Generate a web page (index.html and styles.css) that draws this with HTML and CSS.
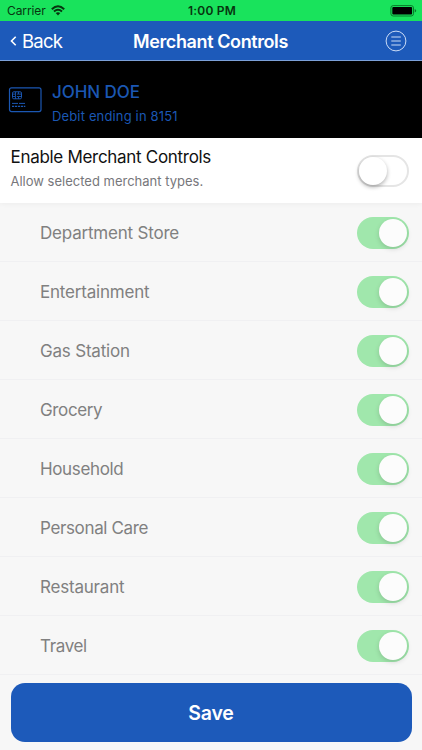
FILE: index.html
```html
<!DOCTYPE html>
<html lang="en">
<head>
<meta charset="utf-8">
<title>Merchant Controls</title>
<link rel="stylesheet" href="styles.css">
</head>
<body>
<div class="status">
  <div class="carrier"><span>Carrier</span>
    <svg width="14" height="11" viewBox="0 0 14 11" fill="none" stroke="#07350f" stroke-width="2"><path d="M.8 4.2Q7-1.6 13.2 4.2M3 6.6Q7 3 11 6.6"/><path d="M4.7 8.1Q7 6.2 9.3 8.1L7 10.5Z" fill="#07350f" stroke="none"/></svg>
  </div>
  <span class="time">1:00 PM</span>
  <svg class="battery" width="27" height="12" viewBox="0 0 27 12"><rect x=".9" y=".6" width="22.6" height="10.4" rx="2.3" fill="none" stroke="#087c2a"/><rect x="2.3" y="2" width="19.8" height="7.6" rx="1" fill="#000"/><path d="M24.7 4v3.6q1.5-.5 1.5-1.8T24.7 4Z" fill="#087c2a"/></svg>
</div>
<header class="nav">
  <div class="back"><svg width="7" height="10" viewBox="0 0 7 10" fill="none" stroke="#fff" stroke-width="1.6"><path d="M5.7.8 1.5 5l4.2 4.2"/></svg><span>Back</span></div>
  <h1>Merchant Controls</h1>
  <svg class="menu" width="22" height="22" viewBox="0 0 22 22" fill="none" stroke="#cbdcf6" stroke-width="1"><circle cx="11" cy="11" r="9.9"/><path d="M6.3 7h9.5M6.3 11h9.5M6.3 15h9.5"/></svg>
</header>
<section class="account">
  <svg width="34" height="26" viewBox="0 0 34 26" fill="none" stroke="#1b57b3"><rect x="1.5" y=".8" width="31.5" height="23.8" rx="2" stroke-width="1.2"/><rect x="4.5" y="4.8" width="9" height="7" rx="1.3"/><path d="M4.5 7.1h3V4.8M4.5 9.5h3v2.3M7.5 7.1v2.4M13.5 7.1h-3M13.5 9.5h-3M10.5 4.8v2.3H8.8M10.5 11.8V9.5H8.8" stroke-width=".9"/><path d="M4 16.4h6M11 16.4h6" stroke-width="1"/><path d="M4 19.4h13.3" stroke-width="1.4" stroke-dasharray="2.2 .8"/></svg>
  <div><div class="name">JOHN DOE</div><div class="card">Debit ending in 8151</div></div>
</section>
<section class="enable">
  <div class="copy"><div class="title">Enable Merchant Controls</div><div class="hint">Allow selected merchant types.</div></div>
  <span class="toggle off"></span>
</section>
<ul class="types">
  <li><span>Department Store</span><i class="toggle"></i></li>
  <li><span>Entertainment</span><i class="toggle"></i></li>
  <li><span>Gas Station</span><i class="toggle"></i></li>
  <li><span class="tight">Grocery</span><i class="toggle"></i></li>
  <li><span class="tight">Household</span><i class="toggle"></i></li>
  <li><span class="tight">Personal Care</span><i class="toggle"></i></li>
  <li><span>Restaurant</span><i class="toggle"></i></li>
  <li><span class="tight">Travel</span><i class="toggle"></i></li>
</ul>
<button class="save">Save</button>
</body>
</html>
```
FILE: styles.css
```css
* { box-sizing: border-box; }
body { margin: 0; width: 422px; height: 750px; overflow: hidden; background: #f7f7f7; font-family: Inter, "Liberation Sans", sans-serif; display: flex; flex-direction: column; }
svg { display: block; flex: none; }
.status { height: 21px; background: #19e35c; color: #07350f; display: grid; grid-template-columns: 1fr auto 1fr; align-items: center; padding: 0 5px 0 7px; font-size: 12px; line-height: 21px; }
.carrier { display: flex; align-items: center; gap: 5px; }
.carrier span { letter-spacing: -.1px; }
.time { font-weight: 600; letter-spacing: .2px; }
.battery { justify-self: end; }
.nav { height: 40px; background: #1d5aba; border-bottom: 1px solid #7ca1d8; color: #fff; display: grid; grid-template-columns: 1fr auto 1fr; align-items: center; padding: 0 15px 0 10px; }
.back { display: flex; align-items: center; gap: 5px; font-size: 18.5px; letter-spacing: -.75px; }
.back span { letter-spacing: -.75px; }
.nav h1 { margin: 1px 0 0 4px; font-size: 18px; font-weight: 600; letter-spacing: -.4px; }
.menu { justify-self: end; }
.account { height: 77px; background: #000; color: #1b57b3; display: flex; align-items: center; gap: 10px; padding-left: 8px; }
.account > div { padding-top: 8px; }
.name { font-size: 17px; font-weight: 500; line-height: 24px; letter-spacing: -.05px; }
.card { font-size: 13px; line-height: 24px; letter-spacing: .15px; }
.enable { height: 65px; background: #fff; display: flex; justify-content: space-between; align-items: center; padding: 0 13.5px 0 10.5px; box-shadow: 0 1px 5px #0000000c; }
.copy { padding-bottom: 4px; }
.title { font-size: 17px; line-height: 24px; color: #111; letter-spacing: -.3px; }
.hint { font-size: 13px; line-height: 24px; color: #77777b; }
.types { list-style: none; margin: 0; padding: 0; }
.types li { height: 59px; border-bottom: 1px solid #f0f0f2; display: flex; justify-content: space-between; align-items: center; padding: 2px 13.5px 0 40px; font-size: 17px; letter-spacing: -.2px; color: #808080; }
.types .tight { letter-spacing: -.36px; }
.toggle { width: 52px; height: 32px; border-radius: 16px; padding: 2px; background: #a0e7ac; display: flex; justify-content: flex-end; flex: none; }
.toggle::after { content: ""; width: 28px; height: 28px; border-radius: 50%; background: #fcfcfc; box-shadow: 0 2px 5px #00000026; }
.off { background: #fff; border: 2px solid #e5e5e5; padding: 0; justify-content: flex-start; }
.off::after { background: #fff; box-shadow: 0 2px 4px #00000050; }
.save { margin: 8px 10.5px 0; height: 58.5px; border: 0; border-radius: 14px; background: #1d5aba; color: #fff; font: 600 19.5px/60px Inter, sans-serif; letter-spacing: -.2px; padding: 0; }
```
